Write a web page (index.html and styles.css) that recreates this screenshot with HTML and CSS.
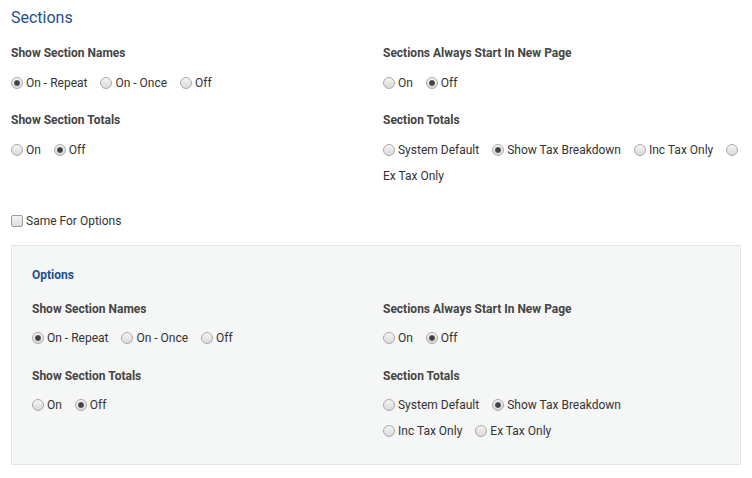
FILE: index.html
```html
<!DOCTYPE html>
<html>
<head>
<meta charset="utf-8">
<link rel="stylesheet" href="styles.css">
</head>
<body>
<div class="page">
  <h2 class="title">Sections</h2>
  <div class="grid outer">
    <div class="field">
      <div class="label">Show Section Names</div>
      <div class="opts"><label class="opt"><i class="rb on"></i> <span>On - Repeat</span></label> <label class="opt"><i class="rb"></i> <span>On - Once</span></label> <label class="opt"><i class="rb"></i> <span>Off</span></label></div>
    </div>
    <div class="field">
      <div class="label">Sections Always Start In New Page</div>
      <div class="opts"><label class="opt"><i class="rb"></i> <span>On</span></label> <label class="opt"><i class="rb on"></i> <span>Off</span></label></div>
    </div>
    <div class="field">
      <div class="label">Show Section Totals</div>
      <div class="opts"><label class="opt"><i class="rb"></i> <span>On</span></label> <label class="opt"><i class="rb on"></i> <span>Off</span></label></div>
    </div>
    <div class="field">
      <div class="label">Section Totals</div>
      <div class="opts"><label class="opt"><i class="rb"></i> <span>System Default</span></label> <label class="opt"><i class="rb on"></i> <span>Show Tax Breakdown</span></label> <label class="opt"><i class="rb"></i> <span>Inc Tax Only</span></label> <label class="opt"><i class="rb"></i> <span>Ex Tax Only</span></label></div>
    </div>
  </div>
  <div class="check"><i class="cb"></i><span>Same For Options</span></div>
  <div class="box">
    <div class="box-title">Options</div>
    <div class="grid inner">
      <div class="field">
        <div class="label">Show Section Names</div>
        <div class="opts"><label class="opt"><i class="rb on"></i> <span>On - Repeat</span></label> <label class="opt"><i class="rb"></i> <span>On - Once</span></label> <label class="opt"><i class="rb"></i> <span>Off</span></label></div>
      </div>
      <div class="field">
        <div class="label">Sections Always Start In New Page</div>
        <div class="opts"><label class="opt"><i class="rb"></i> <span>On</span></label> <label class="opt"><i class="rb on"></i> <span>Off</span></label></div>
      </div>
      <div class="field">
        <div class="label">Show Section Totals</div>
        <div class="opts"><label class="opt"><i class="rb"></i> <span>On</span></label> <label class="opt"><i class="rb on"></i> <span>Off</span></label></div>
      </div>
      <div class="field">
        <div class="label">Section Totals</div>
        <div class="opts"><label class="opt keep"><i class="rb"></i> <span>System Default</span></label> <label class="opt keep"><i class="rb on"></i> <span>Show Tax Breakdown</span></label> <label class="opt keep"><i class="rb"></i> <span>Inc Tax Only</span></label> <label class="opt keep"><i class="rb"></i> <span>Ex Tax Only</span></label></div>
      </div>
    </div>
  </div>
</div>
</body>
</html>
```

FILE: styles.css
```css
html, body {
  margin: 0;
  padding: 0;
  background: #ffffff;
}
body {
  font-family: Roboto, "Liberation Sans", Arial, sans-serif;
  font-size: 12px;
  color: #333333;
}
.page {
  padding: 8px 11px 0 11px;
}
.title {
  margin: 0 0 17px 0;
  font-size: 16px;
  line-height: 20px;
  font-weight: 400;
  color: #1d4f8c;
}
.grid {
  display: grid;
  row-gap: 16px;
}
.outer {
  grid-template-columns: 372px 358px;
}
.inner {
  grid-template-columns: 351px 248px;
  row-gap: 17px;
}
.label {
  font-weight: 700;
  line-height: 16px;
  color: #444444;
  margin-bottom: 9px;
}
.inner .label {
  margin-bottom: 8px;
}
.opts {
  line-height: 26px;
  color: #333333;
}
.opt span {
  margin-right: 10px;
}
.opt.keep {
  white-space: nowrap;
}
.rb {
  display: inline-block;
  box-sizing: border-box;
  width: 12px;
  height: 12px;
  border-radius: 50%;
  border: 1px solid #a9a9a9;
  background: linear-gradient(#f4f4f4, #dadada);
  vertical-align: -2px;
  position: relative;
}
.rb.on::after {
  content: "";
  position: absolute;
  left: 2px;
  top: 2px;
  width: 6px;
  height: 6px;
  border-radius: 50%;
  background: radial-gradient(circle, #404040 0, #404040 1.6px, #6a6a6a 3px);
}
.check {
  margin-top: 19px;
  line-height: 26px;
  display: flex;
  align-items: center;
}
.cb {
  display: inline-block;
  box-sizing: border-box;
  width: 12px;
  height: 12px;
  border: 1px solid #9c9c9c;
  border-radius: 2px;
  background: linear-gradient(#f4f4f4, #dcdcdc);
  margin-right: 3px;
}
.box {
  margin-top: 11px;
  border: 1px solid #e4e6e5;
  background: #f5f6f6;
  padding: 21px 20px 20px 20px;
}
.box-title {
  font-weight: 700;
  line-height: 16px;
  color: #1d4f8c;
  margin-bottom: 18px;
}
```
